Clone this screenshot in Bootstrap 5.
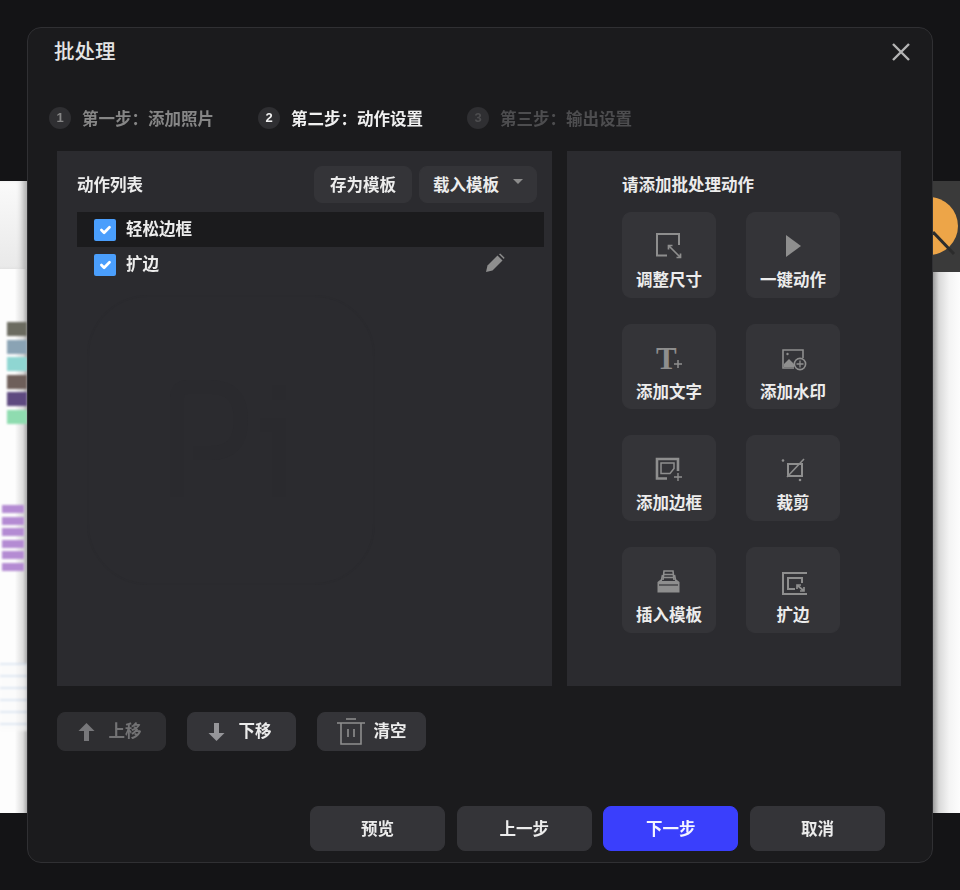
<!DOCTYPE html>
<html lang="zh-CN">
<head>
    <meta charset="UTF-8">
    <meta content="width=device-width, initial-scale=1.0" name="viewport">
    <title>批处理</title>
    <link href="https://cdn.jsdelivr.net/npm/bootstrap@5.3.2/dist/css/bootstrap.min.css" rel="stylesheet">
    <style>
        html, body {
            height: 890px;
            overflow: hidden;
            background-color: #141416;
        }

        body {
            font-family: "Liberation Sans", "Noto Sans CJK SC", sans-serif;
            font-size: 16.5px;
            font-weight: 700;
            color: #ececec;
        }

        .stage {
            position: relative;
            width: 960px;
            height: 890px;
            padding-top: 181px;
            filter: blur(.45px);
        }

        /* blurred app window behind the dialog */
        .back-strip {
            position: relative;
            height: 632px;
            overflow: hidden;
            background-color: #fbfbfb;
        }

        .back-left {
            position: absolute;
            left: 0;
            top: 0;
            bottom: 0;
            width: 27px;
            background: linear-gradient(90deg, #fdfdfd 55%, #dcdcdc 85%, #a8a8a8 100%);
        }

        .back-left-top {
            position: absolute;
            left: 0;
            top: 0;
            width: 27px;
            height: 88px;
            background: linear-gradient(180deg, #fafafa, #e9e9e9);
            box-shadow: inset -8px 0 6px -4px #aaa;
        }

        .back-right {
            position: absolute;
            left: 933px;
            top: 0;
            bottom: 0;
            width: 27px;
            background: linear-gradient(90deg, #9c9c9c 0, #d9d9d9 22%, #f4f4f4 60%, #fdfdfd 100%);
        }

        .back-right-top {
            position: absolute;
            left: 933px;
            top: 0;
            width: 27px;
            height: 91px;
            overflow: hidden;
            background-color: #3a3a3a;
        }

        .thumbs {
            position: absolute;
            left: 7px;
            top: 141px;
            width: 20px;
            filter: blur(1px);
        }

        .thumbs div {
            height: 14px;
            margin-bottom: 3.5px;
        }

        .tags {
            position: absolute;
            left: 2px;
            top: 324px;
            width: 22px;
            filter: blur(1px);
        }

        .tags div {
            height: 8px;
            margin-bottom: 3.5px;
            background-color: #b48bd3;
        }

        .back-lines {
            position: absolute;
            left: 0;
            top: 482px;
            width: 27px;
            height: 68px;
            filter: blur(1px);
            background: repeating-linear-gradient(180deg, #c9d8ec 0 2px, #fbfbfb 2px 12px);
            opacity: .55;
        }

        /* dialog */
        .dialog-box {
            position: absolute;
            left: 27px;
            top: 27px;
            width: 906px;
            height: 836px;
            background-color: #1b1b1d;
            border: 1px solid #303033;
            border-radius: 14px;
        }

        .dialog-head {
            height: 48px;
            padding: 0 21px 0 26px;
        }

        .dialog-title {
            padding-top: 1px;
            font-size: 20.5px;
            font-weight: 500;
            color: #e4e4e4;
        }

        .step-row {
            height: 22px;
            margin: 31px 0 22px 21px;
            gap: 44px;
        }

        .step-item {
            gap: 11px;
        }

        .step-label {
            padding-top: 2px;
        }

        .step-num {
            width: 22px;
            height: 22px;
            border-radius: 50%;
            background-color: #2f2f32;
            font-size: 13px;
        }

        .step-done {
            color: #868686;
        }

        .step-now {
            color: #f0f0f0;
        }

        .step-todo {
            color: #4d4d4f;
        }

        .panel-row {
            height: 535px;
            margin-left: 29px;
            gap: 15px;
        }

        .work-panel {
            position: relative;
            background-color: #2b2b2f;
        }

        .panel-left {
            width: 495px;
            padding: 15px 8px 0 20px;
        }

        .panel-right {
            width: 334px;
            padding: 24px 0 0 55px;
        }

        .watermark {
            position: absolute;
            left: 29px;
            top: 143px;
        }

        .panel-top {
            height: 37px;
            padding-right: 7px;
            margin-bottom: 9px;
            gap: 7px;
        }

        .panel-name {
            padding-top: 1px;
        }

        .btn-dark-soft {
            --bs-btn-color: #ececec;
            --bs-btn-bg: #343438;
            --bs-btn-border-color: #343438;
            --bs-btn-hover-color: #ececec;
            --bs-btn-hover-bg: #3b3b40;
            --bs-btn-hover-border-color: #3b3b40;
            --bs-btn-disabled-color: #737375;
            --bs-btn-disabled-bg: #2e2e31;
            --bs-btn-disabled-border-color: #2e2e31;
            --bs-btn-disabled-opacity: 1;
            --bs-btn-font-weight: 700;
            --bs-btn-font-size: 16.5px;
            --bs-btn-padding-x: 0;
            --bs-btn-padding-y: 0;
            --bs-btn-border-radius: 8px;
        }

        .btn-save {
            width: 98px;
            height: 37px;
            padding-top: 2px;
        }

        .btn-load {
            position: relative;
            width: 118px;
            height: 37px;
            padding-top: 2px;
            padding-right: 24px;
        }

        .load-caret {
            position: absolute;
            right: 13px;
            top: 12px;
            width: 0;
            height: 0;
            border-left: 5px solid transparent;
            border-right: 5px solid transparent;
            border-top: 5px solid #8c8c8c;
        }

        .action-list {
            --bs-list-group-bg: transparent;
            --bs-list-group-border-width: 0;
            --bs-list-group-color: #ececec;
            --bs-list-group-item-padding-x: 17px;
            --bs-list-group-item-padding-y: 0;
            --bs-list-group-border-radius: 0;
        }

        .action-row {
            height: 35px;
            gap: 10px;
        }

        .action-row.row-picked {
            background-color: #1b1b1d;
        }

        .action-check.form-check-input {
            width: 22px;
            height: 22px;
            margin: 0;
            border: 0;
            border-radius: 2px;
            background-color: #4a9efc;
            background-size: 18px;
        }

        .action-edit {
            margin-left: auto;
            margin-right: 22px;
            margin-top: -3px;
        }

        .panel-heading {
            height: 20px;
            line-height: 20px;
            margin-bottom: 17px;
        }

        .tile-grid {
            display: grid;
            grid-template-columns: 94px 94px;
            grid-auto-rows: 85.5px;
            column-gap: 30px;
            row-gap: 26.2px;
        }

        .tile-btn {
            display: flex;
            flex-direction: column;
            align-items: center;
            padding-top: 16px;
            --bs-btn-border-radius: 9px;
        }

        .tile-btn svg {
            display: block;
            margin-bottom: 9px;
            overflow: visible;
        }

        .tile-btn span {
            line-height: 20px;
        }

        .tool-row {
            margin: 26px 0 0 29px;
            gap: 21px;
        }

        .btn-tool {
            width: 109px;
            height: 39px;
            padding-right: 4px;
            gap: 14px;
        }

        .btn-clear {
            padding-right: 0;
            gap: 9px;
        }

        .foot-row {
            margin-top: auto;
            margin-bottom: 11px;
            margin-right: 47px;
            gap: 11.7px;
        }

        .btn-foot {
            width: 135px;
            height: 45px;
            padding-top: 1px;
        }

        .btn-next {
            --bs-btn-color: #f4f4ff;
            --bs-btn-bg: #3a3ffc;
            --bs-btn-border-color: #3a3ffc;
            --bs-btn-hover-color: #f4f4ff;
            --bs-btn-hover-bg: #3a3ffc;
            --bs-btn-hover-border-color: #3a3ffc;
        }
    </style>
</head>
<body>
<div class="stage">
    <div class="back-strip">
        <div class="back-left"></div>
        <div class="back-left-top"></div>
        <div class="thumbs">
            <div style="background-color:#6b6b60"></div>
            <div style="background-color:#8aa3b4"></div>
            <div style="background-color:#8fd6d2"></div>
            <div style="background-color:#6e5f5a"></div>
            <div style="background-color:#5e4a80"></div>
            <div style="background-color:#8fdcb0"></div>
        </div>
        <div class="tags">
            <div></div><div></div><div></div><div></div><div></div><div></div>
        </div>
        <div class="back-lines"></div>
        <div class="back-right"></div>
        <div class="back-right-top">
            <svg width="27" height="91" viewBox="0 0 27 91">
                <circle cx="-4" cy="45" r="29" fill="#eda548"/>
                <path d="M0 51 L21 73" stroke="#2c2c2c" stroke-width="3"/>
            </svg>
        </div>
    </div>

    <div class="dialog-box d-flex flex-column">
        <div class="dialog-head d-flex align-items-center justify-content-between">
            <div class="dialog-title">批处理</div>
            <svg width="20" height="20" viewBox="0 0 20 20">
                <path d="M2 2 L18 18 M18 2 L2 18" stroke="#b4b4b4" stroke-width="2.4" fill="none"/>
            </svg>
        </div>

        <div class="step-row d-flex align-items-center">
            <div class="step-item step-done d-flex align-items-center">
                <span class="step-num d-flex align-items-center justify-content-center">1</span>
                <span class="step-label">第一步：添加照片</span>
            </div>
            <div class="step-item step-now d-flex align-items-center">
                <span class="step-num d-flex align-items-center justify-content-center">2</span>
                <span class="step-label">第二步：动作设置</span>
            </div>
            <div class="step-item step-todo d-flex align-items-center">
                <span class="step-num d-flex align-items-center justify-content-center">3</span>
                <span class="step-label">第三步：输出设置</span>
            </div>
        </div>

        <div class="panel-row d-flex">
            <div class="work-panel panel-left">
                <svg class="watermark" width="290" height="292" viewBox="0 0 290 292" fill="none" stroke="#2a2a2e" stroke-width="14">
                    <rect x="2" y="2" width="286" height="288" rx="60" stroke-width="2"/>
                    <path d="M91 203 V104 Q91 93 102 93 H125 Q155 93 155 126 Q155 159 125 159 H107"/>
                    <path d="M174 131 H193 V203 M193 91 V106"/>
                </svg>
                <div class="panel-top position-relative d-flex align-items-center">
                    <div class="panel-name me-auto">动作列表</div>
                    <button class="btn btn-dark-soft btn-save" type="button">存为模板</button>
                    <button class="btn btn-dark-soft btn-load" type="button">载入模板<span class="load-caret"></span></button>
                </div>
                <div class="list-group action-list position-relative">
                    <div class="list-group-item action-row row-picked d-flex align-items-center">
                        <input checked class="form-check-input action-check" type="checkbox">
                        <span>轻松边框</span>
                    </div>
                    <div class="list-group-item action-row d-flex align-items-center">
                        <input checked class="form-check-input action-check" type="checkbox">
                        <span>扩边</span>
                        <svg class="action-edit" width="20" height="20" viewBox="0 0 20 20">
                            <path d="M1 19 L2.5 12.5 L12.5 2.5 L17.5 7.5 L7.5 17.5 Z" fill="#8e8e8e"/>
                            <path d="M14 1.2 L15.2 0.4 L19.6 4.8 L18.8 6 Z" fill="#8e8e8e"/>
                        </svg>
                    </div>
                </div>
            </div>

            <div class="work-panel panel-right">
                <div class="panel-heading">请添加批处理动作</div>
                <div class="tile-grid">
                    <button class="btn btn-dark-soft tile-btn" type="button">
                        <svg width="32" height="32" viewBox="0 0 32 32" fill="none" stroke="#8e8e8e" stroke-width="2">
                            <path d="M14 26.5 H4 V5 H26 V16"/>
                            <path d="M15.5 16.5 L27.5 28.5 M15.5 20.5 V16.5 H19.5 M23.5 28.5 H27.5 V24.5" stroke-width="1.7"/>
                        </svg>
                        <span>调整尺寸</span>
                    </button>
                    <button class="btn btn-dark-soft tile-btn" type="button">
                        <svg width="32" height="32" viewBox="0 0 32 32">
                            <path d="M9 6 L24 17 L9 28 Z" fill="#8e8e8e"/>
                        </svg>
                        <span>一键动作</span>
                    </button>
                    <button class="btn btn-dark-soft tile-btn" type="button">
                        <svg width="32" height="32" viewBox="0 0 32 32">
                            <text x="3" y="28" font-family="Liberation Serif" font-size="31" font-weight="700" fill="#8e8e8e">T</text>
                            <path d="M25 19 V27 M21 23 H29" stroke="#8e8e8e" stroke-width="1.5"/>
                        </svg>
                        <span>添加文字</span>
                    </button>
                    <button class="btn btn-dark-soft tile-btn" type="button">
                        <svg width="32" height="32" viewBox="0 0 32 32" fill="none" stroke="#8e8e8e" stroke-width="1.6">
                            <path d="M17 27 H6 V9 H26 V17"/>
                            <circle cx="10.5" cy="13" r="1.2" fill="#8e8e8e" stroke="none"/>
                            <path d="M7 26 V23 L12 18 L17 23 V26 Z" fill="#8e8e8e" stroke="none"/>
                            <circle cx="23" cy="23" r="5.6"/>
                            <path d="M23 19.5 V26.5 M19.5 23 H26.5" stroke-width="1.3"/>
                        </svg>
                        <span>添加水印</span>
                    </button>
                    <button class="btn btn-dark-soft tile-btn" type="button">
                        <svg width="32" height="32" viewBox="0 0 32 32" fill="none" stroke="#8e8e8e" stroke-width="2">
                            <path d="M14 26.5 H4 V7 H25 V19" stroke-width="2.6"/>
                            <path d="M17 21.5 L8 21.5 V11 H21 V16.5 L17 21.5 Z" stroke-width="1.5"/>
                            <path d="M25 21 V29 M21 25 H29" stroke-width="1.4"/>
                        </svg>
                        <span>添加边框</span>
                    </button>
                    <button class="btn btn-dark-soft tile-btn" type="button">
                        <svg width="32" height="32" viewBox="0 0 32 32" fill="none" stroke="#8e8e8e" stroke-width="2">
                            <path d="M11 12 H25 V24 H11 Z"/>
                            <path d="M10 25 L27 7" stroke-width="1.6"/>
                            <circle cx="6" cy="8.500" r="1.300" fill="#8e8e8e" stroke="none"/>
                            <circle cx="23" cy="28" r="1.300" fill="#8e8e8e" stroke="none"/>
                        </svg>
                        <span>裁剪</span>
                    </button>
                    <button class="btn btn-dark-soft tile-btn" type="button">
                        <svg width="32" height="32" viewBox="0 0 32 32" fill="none" stroke="#8e8e8e" stroke-width="1.6">
                            <path d="M10 16 L11 7 H20 L21 16"/>
                            <path d="M8.500 16 L9.500 11 M22.500 16 L21.500 11 M11 10.500 H20 M10.500 13.500 H20.500"/>
                            <path d="M4.500 18 L9 14.500 V17 H22 V14.500 L26.500 18 V28.500 H4.500 Z" fill="#8e8e8e" stroke="none"/>
                            <path d="M6 21 H25" stroke="#343438" stroke-width="1.200"/>
                        </svg>
                        <span>插入模板</span>
                    </button>
                    <button class="btn btn-dark-soft tile-btn" type="button">
                        <svg width="32" height="32" viewBox="0 0 32 32" fill="none" stroke="#8e8e8e" stroke-width="2">
                            <path d="M30 9 H6 V30 H30"/>
                            <path d="M18 25 H11 V14 H25 V19" stroke-width="2"/>
                            <path d="M20 21 L27 27 M20 25 V21 H24 M23 27 H27 V23" stroke-width="1.7"/>
                        </svg>
                        <span>扩边</span>
                    </button>
                </div>
            </div>
        </div>

        <div class="tool-row d-flex">
            <button class="btn btn-dark-soft btn-tool d-flex align-items-center justify-content-center" disabled type="button">
                <svg width="17" height="18" viewBox="0 0 17 18">
                    <path d="M8.500 0 L16.500 8 H11 V18 H6 V8 H0.500 Z" fill="#77777a"/>
                </svg>
                <span>上移</span>
            </button>
            <button class="btn btn-dark-soft btn-tool d-flex align-items-center justify-content-center" type="button">
                <svg width="17" height="18" viewBox="0 0 17 18">
                    <path d="M8.500 18 L16.500 10 H11 V0 H6 V10 H0.500 Z" fill="#96969a"/>
                </svg>
                <span>下移</span>
            </button>
            <button class="btn btn-dark-soft btn-tool btn-clear d-flex align-items-center justify-content-center" type="button">
                <svg width="28" height="27" viewBox="0 0 28 27" fill="none" stroke="#8e8e8e" stroke-width="1.600">
                    <path d="M0 5 H28 M9 1 H19"/>
                    <path d="M4 5 V26 H24 V5"/>
                    <path d="M11 11 V19 M17 11 V19"/>
                </svg>
                <span>清空</span>
            </button>
        </div>

        <div class="foot-row d-flex justify-content-end">
            <button class="btn btn-dark-soft btn-foot" type="button">预览</button>
            <button class="btn btn-dark-soft btn-foot" type="button">上一步</button>
            <button class="btn btn-dark-soft btn-next btn-foot" type="button">下一步</button>
            <button class="btn btn-dark-soft btn-foot" type="button">取消</button>
        </div>
    </div>
</div>

<script src="https://cdn.jsdelivr.net/npm/bootstrap@5.3.2/dist/js/bootstrap.bundle.min.js"></script>
</body>
</html>
